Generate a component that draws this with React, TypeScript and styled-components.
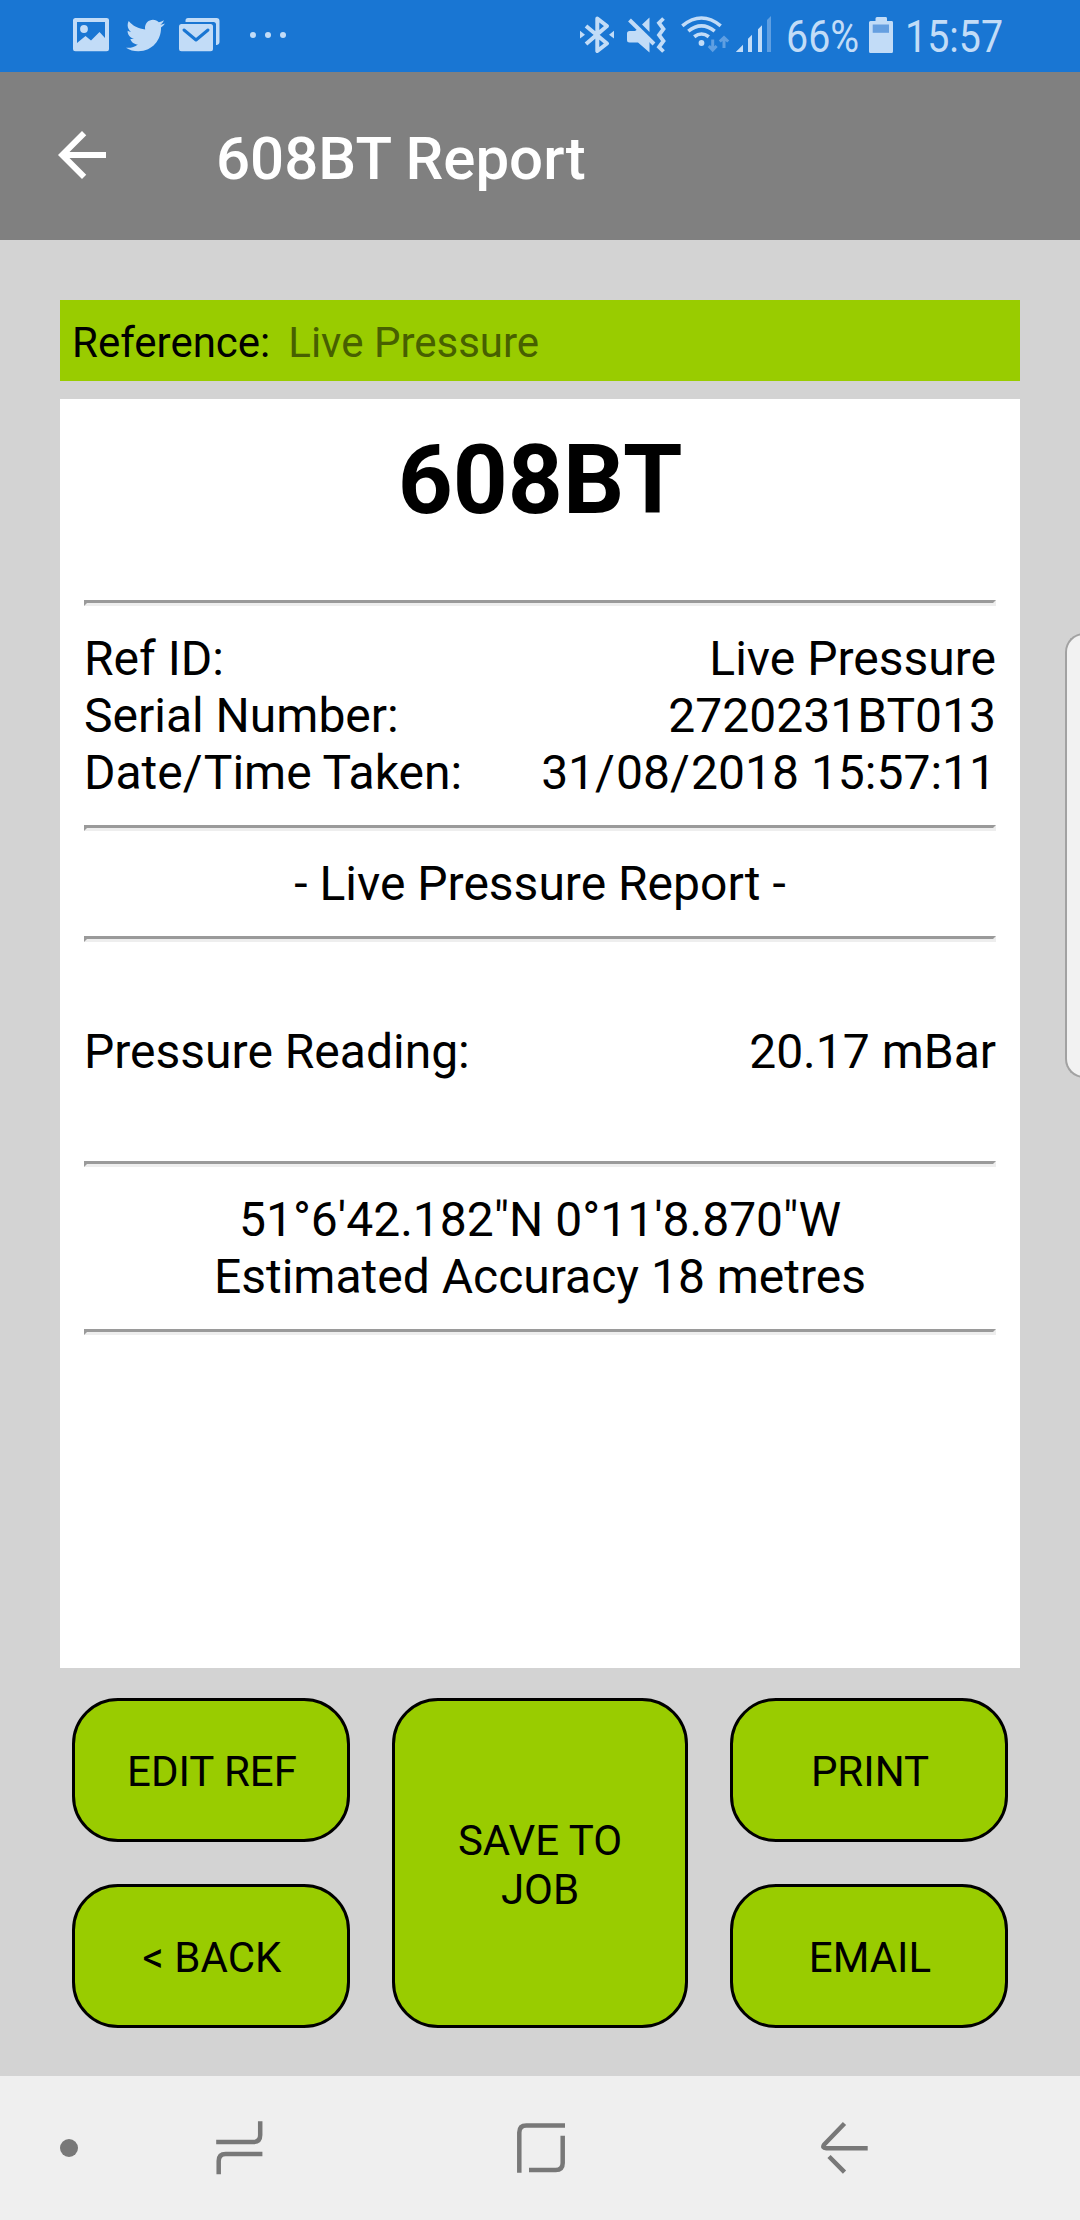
import React from "react";
import styled, { createGlobalStyle } from "styled-components";
import { FaTwitter } from "react-icons/fa";

const GlobalStyle = createGlobalStyle`
  *, *::before, *::after { box-sizing: border-box; }
  html, body { margin: 0; padding: 0; }
  body { background: #d3d3d3; font-family: Roboto, "Liberation Sans", sans-serif; color: #000; }
`;

const LIGHT = "#c2dcf7";
const BLUE = "#1976d3";
const GREEN = "#99cc00";
const NAV_GREY = "#787878";

const Screen = styled.div`
  position: relative;
  display: flex;
  flex-direction: column;
  width: 1080px;
  height: 2220px;
  overflow: hidden;
  background: #d3d3d3;
`;

const StatusBar = styled.header`
  display: flex;
  align-items: center;
  height: 72px;
  padding: 0 77px 0 73px;
  background: ${BLUE};
  color: ${LIGHT};
`;

const StatusGroup = styled.div<{ $end?: boolean }>`
  display: flex;
  align-items: center;
  height: 72px;
  margin-left: ${(p) => (p.$end ? "auto" : "0")};
`;

const Glyph = styled.svg<{ $before?: number }>`
  display: block;
  flex: none;
  margin-left: ${(p) => p.$before ?? 0}px;
`;

const Bird = styled(FaTwitter)`
  width: 39px;
  height: 39px;
  margin: -2px 0 0 17px;
`;

const StatusText = styled.span<{ $width: number; $before: number }>`
  width: ${(p) => p.$width}px;
  margin-left: ${(p) => p.$before}px;
  font-size: 45px;
  line-height: 53px;
  white-space: nowrap;
  transform: scaleX(0.875);
  transform-origin: left center;
`;

const AppBar = styled.div`
  display: flex;
  align-items: center;
  height: 168px;
  padding-left: 46px;
  background: #808080;
  color: #fff;
`;

const BackButton = styled.button`
  display: flex;
  width: 72px;
  height: 72px;
  margin-bottom: 2px;
  padding: 0;
  border: 0;
  background: none;
  color: inherit;
`;

const Title = styled.h1`
  margin: 6px 0 0 98px;
  font-size: 60px;
  font-weight: 500;
  line-height: 70px;
`;

const Main = styled.main`
  display: flex;
  flex: 1;
  flex-direction: column;
  padding: 60px 60px 48px;
`;

const ReferenceBar = styled.div`
  display: flex;
  align-items: center;
  gap: 18px;
  height: 81px;
  padding: 4px 12px 0;
  background: ${GREEN};
  font-size: 42px;
  line-height: 49px;
`;

const ReferenceValue = styled.span`
  color: #476000;
`;

const Report = styled.section`
  height: 1269px;
  margin-top: 18px;
  padding: 25px 24px 24px;
  background: #fff;
  font-size: 48px;
  line-height: 57px;
`;

const ReportTitle = styled.h2`
  margin: 0 0 63px;
  font-size: 96px;
  font-weight: 700;
  line-height: 113px;
  text-align: center;
`;

const Rule = styled.hr`
  height: 6px;
  margin: 24px 0;
  border: 3px solid;
  border-color: #9a9a9a #eee #eee #9a9a9a;
`;

const Row = styled.div`
  display: flex;
  justify-content: space-between;
`;

const Slash = styled.span`
  letter-spacing: 1.2px;
`;

const Centered = styled.div`
  text-align: center;
`;

const Reading = styled.div`
  padding: 57px 0;
`;

const Actions = styled.div`
  display: grid;
  grid-template-columns: 278px 296px 278px;
  grid-template-rows: 144px 144px;
  gap: 42px;
  margin: 30px 12px 0;
`;

const ActionButton = styled.button<{ $tall?: boolean }>`
  grid-row: ${(p) => (p.$tall ? "1 / span 2" : "auto")};
  grid-column: ${(p) => (p.$tall ? "2" : "auto")};
  padding: ${(p) => (p.$tall ? "4px 48px 0" : "2px 0 0 2px")};
  border: 3px solid #000;
  border-radius: 46px;
  background: ${GREEN};
  color: #000;
  font: 400 42px/49px Roboto, "Liberation Sans", sans-serif;
  white-space: ${(p) => (p.$tall ? "normal" : "nowrap")};
`;

const EdgeHandle = styled.div`
  position: absolute;
  top: 633px;
  right: -4px;
  width: 19px;
  height: 445px;
  border: 2px solid #a2a2a2;
  border-right: 0;
  border-radius: 19px 0 0 19px;
  background: #f2f2f2;
`;

const NavBar = styled.nav`
  display: flex;
  align-items: center;
  height: 144px;
  padding-left: 60px;
  background: #efefef;
`;

const details = [
  ["Ref ID:", "Live Pressure"],
  ["Serial Number:", "2720231BT013"],
  ["Date/Time Taken:", "31/08/2018 15:57:11"],
];

const Slashed = ({ text }: { text: string }) => (
  <span>
    {text.split("/").map((part, i) => (
      <React.Fragment key={i}>
        {i > 0 && <Slash>/</Slash>}
        {part}
      </React.Fragment>
    ))}
  </span>
);

const PictureIcon = () => (
  <Glyph width="36" height="72" viewBox="73 0 36 72">
    <path
      fill={LIGHT}
      fillRule="evenodd"
      d="M75.500 18h31a2.500 2.500 0 0 1 2.500 2.500v28.300a2.500 2.500 0 0 1-2.500 2.500h-31a2.500 2.500 0 0 1-2.500-2.500v-28.300a2.500 2.500 0 0 1 2.500-2.500zM77 22v21l8.500-7 5.500 4.500 8.500-8.500 5.500 6V22z"
    />
    <circle cx="84" cy="29" r="3.900" fill={LIGHT} />
  </Glyph>
);

const MailIcon = () => (
  <Glyph width="41" height="72" viewBox="179 0 41 72" $before={14}>
    <path fill={LIGHT} d="M185.500 22v-1.500a2.500 2.500 0 0 1 2.500-2.500h28.500a3 3 0 0 1 3 3v21a3 3 0 0 1-3.500 3V24.500a2.500 2.500 0 0 0-2.500-2.500z" />
    <rect x="179" y="24" width="34" height="27.300" rx="2.500" fill={LIGHT} />
    <path d="M184 30l12 10 12-10" fill="none" stroke={BLUE} strokeWidth="3" strokeLinecap="round" strokeLinejoin="round" />
  </Glyph>
);

const MoreIcon = () => (
  <Glyph width="36" height="72" viewBox="250 0 36 72" $before={30} fill={LIGHT}>
    <circle cx="253" cy="35" r="3" />
    <circle cx="268" cy="35" r="3" />
    <circle cx="283" cy="35" r="3" />
  </Glyph>
);

const BluetoothIcon = () => (
  <Glyph width="34" height="72" viewBox="580 0 34 72">
    <path d="M586 26l21 17.500-9.700 7.500V18.500l9.700 7.500-21 18" fill="none" stroke={LIGHT} strokeWidth="4" strokeLinejoin="round" />
    <path d="M580 30.800l5 3.900-5 3.900zM614 30.800l-5 3.900 5 3.900z" fill={LIGHT} />
  </Glyph>
);

const MuteIcon = () => (
  <Glyph width="39" height="72" viewBox="627 0 39 72" $before={13}>
    <path d="M629.500 31h5.500l3-2 11.500 12v11.500L638 42.500h-8.500a2.500 2.500 0 0 1-2.500-2.500v-6.500a2.500 2.500 0 0 1 2.500-2.500zM642 24.500l7.500-7v14.500z" fill={LIGHT} />
    <path d="M629.500 20l24.500 24" stroke={LIGHT} strokeWidth="4" />
    <path d="M663.500 18.500l-4.500 4.500 4.500 6-4.500 6 4.500 6-4.500 6 4.500 4.500" fill="none" stroke={LIGHT} strokeWidth="3.800" />
  </Glyph>
);

const WifiIcon = () => (
  <Glyph width="49" height="72" viewBox="681 0 49 72" $before={15}>
    <g fill="none" stroke={LIGHT} strokeWidth="3.600">
      <path d="M682.300 25.800Q701.500 10.200 720.700 25.800" />
      <path d="M688.300 31.200Q701.500 20.600 714.700 31.200" />
      <path d="M694.200 36.800Q701.500 31.200 708.800 36.800" />
    </g>
    <circle cx="701.500" cy="43" r="2.900" fill={LIGHT} />
    <path d="M712.700 39.500v10M708.800 46l3.900 4 3.900-4M724 48V38M719.800 41.500l4.200-4 4.200 4" fill="none" stroke="#5f9fe2" strokeWidth="3" />
  </Glyph>
);

const SignalIcon = () => (
  <Glyph width="36" height="72" viewBox="736 0 36 72" $before={6} fill={LIGHT}>
    <path d="M735.800 52l7.200-7.200V52zM748 38.800l4-4V52h-4zM758 29.200l4-4V52h-4z" />
    <path fill="#5f9fe2" d="M767 20l4-4v36h-4z" />
  </Glyph>
);

const BatteryIcon = () => (
  <Glyph width="24" height="72" viewBox="869 0 24 72" $before={11}>
    <path fill={LIGHT} d="M875.500 21v-2.500a1.500 1.500 0 0 1 1.500-1.500h8.500a1.500 1.500 0 0 1 1.500 1.500V21h4.500a1.500 1.500 0 0 1 1.500 1.500v29a1.500 1.500 0 0 1-1.500 1.500h-21a1.500 1.500 0 0 1-1.500-1.500v-29a1.500 1.500 0 0 1 1.500-1.500z" />
    <path fill="#659fe0" d="M872.700 24.500h16.300v8.300h-16.300z" />
  </Glyph>
);

export default function App() {
  return (
    <Screen>
      <GlobalStyle />
      <StatusBar>
        <StatusGroup>
          <PictureIcon />
          <Bird />
          <MailIcon />
          <MoreIcon />
        </StatusGroup>
        <StatusGroup $end>
          <BluetoothIcon />
          <MuteIcon />
          <WifiIcon />
          <SignalIcon />
          <StatusText $width={72} $before={14}>66%</StatusText>
          <BatteryIcon />
          <StatusText $width={98} $before={12}>15:57</StatusText>
        </StatusGroup>
      </StatusBar>
      <AppBar>
        <BackButton aria-label="Back">
          <svg width="72" height="72" viewBox="0 0 24 24" fill="currentColor">
            <path d="M20 11H7.830l5.590-5.590L12 4l-8 8 8 8 1.410-1.410L7.830 13H20v-2z" />
          </svg>
        </BackButton>
        <Title>608BT Report</Title>
      </AppBar>
      <Main>
        <ReferenceBar>
          <span>Reference:</span>
          <ReferenceValue>Live Pressure</ReferenceValue>
        </ReferenceBar>
        <Report>
          <ReportTitle>608BT</ReportTitle>
          <Rule />
          {details.map(([label, value]) => (
            <Row key={label}>
              <Slashed text={label} />
              <Slashed text={value} />
            </Row>
          ))}
          <Rule />
          <Centered>- Live Pressure Report -</Centered>
          <Rule />
          <Reading>
            <Row>
              <span>Pressure Reading:</span>
              <span>20.17 mBar</span>
            </Row>
          </Reading>
          <Rule />
          <Centered>51°6'42.182"N 0°11'8.870"W</Centered>
          <Centered>Estimated Accuracy 18 metres</Centered>
          <Rule />
        </Report>
        <Actions>
          <ActionButton>EDIT REF</ActionButton>
          <ActionButton $tall>SAVE TO JOB</ActionButton>
          <ActionButton>PRINT</ActionButton>
          <ActionButton>&lt; BACK</ActionButton>
          <ActionButton>EMAIL</ActionButton>
        </Actions>
      </Main>
      <NavBar>
        <Glyph width="18" height="144" viewBox="60 2076 18 144">
          <circle cx="69" cy="2148" r="9" fill={NAV_GREY} />
        </Glyph>
        <Glyph width="48" height="144" viewBox="216 2076 48 144" $before={138} fill="none" stroke={NAV_GREY} strokeWidth="4.500">
          <path d="M260.200 2121.300v13.700q0 7-7 7h-37M218.700 2174.300v-13.300q0-7 7-7h36.700" />
        </Glyph>
        <Glyph width="48" height="144" viewBox="517 2076 48 144" $before={253} fill="none" stroke={NAV_GREY} strokeWidth="4.500">
          <path d="M519.300 2172.700v-40.200q0-7 7-7H565M562.700 2135.700v27.300q0 7-7 7H529" />
        </Glyph>
        <Glyph width="48" height="144" viewBox="821 2076 48 144" $before={256} fill="none" stroke={NAV_GREY} strokeWidth="4.500">
          <path d="M844.500 2123.500l-20.300 21q-2.500 3.700 2 3.700h41.500M829 2156.500l15.500 15.700" strokeLinejoin="round" />
        </Glyph>
      </NavBar>
      <EdgeHandle />
    </Screen>
  );
}
